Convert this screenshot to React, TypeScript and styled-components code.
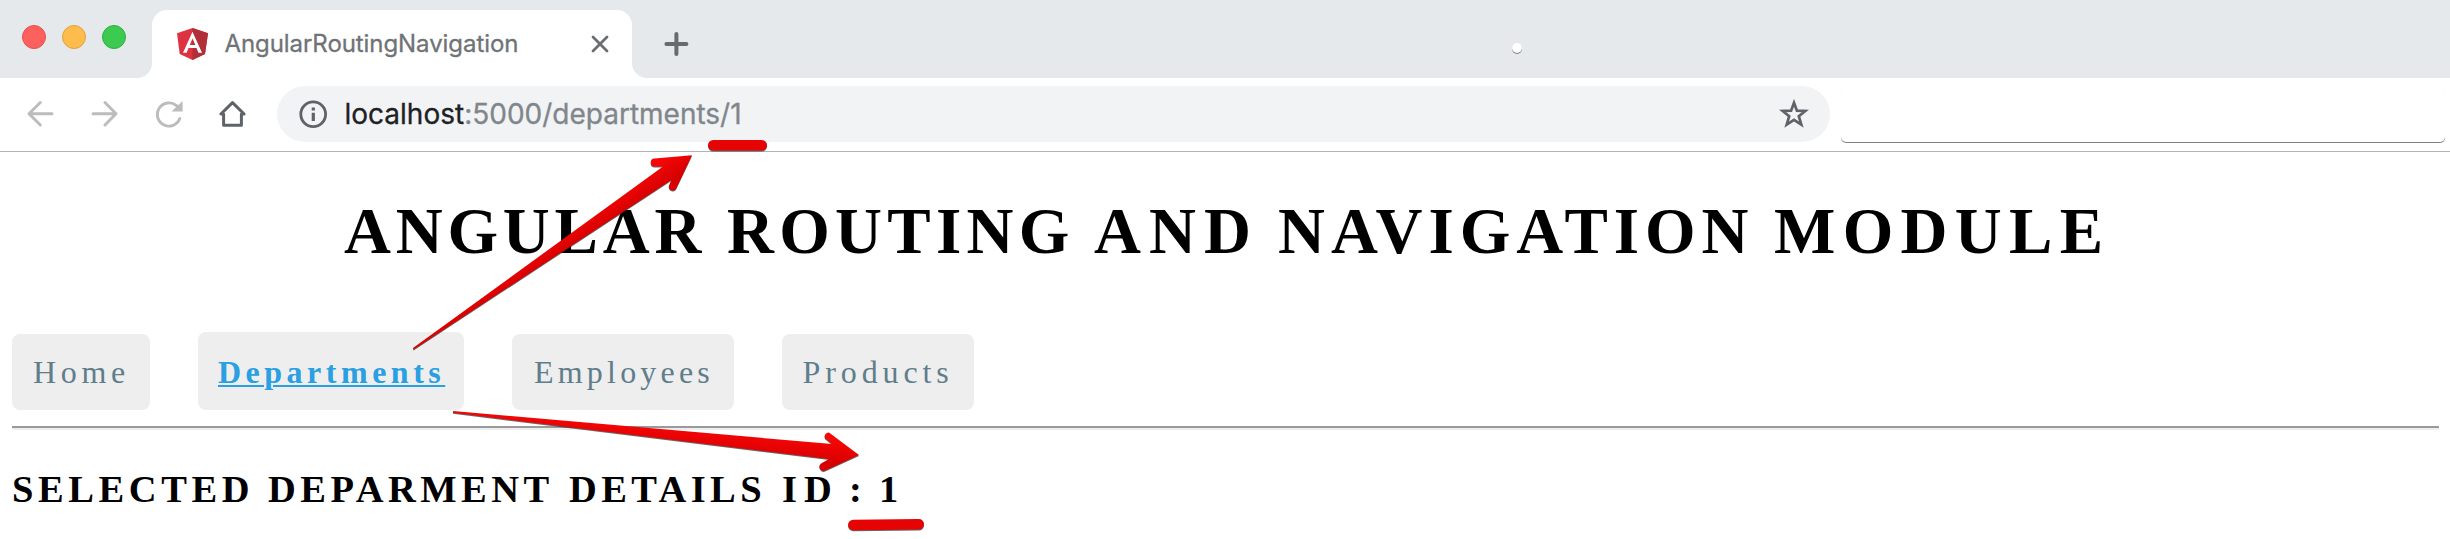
import React from "react";
import styled, { createGlobalStyle } from "styled-components";

const GlobalStyle = createGlobalStyle`
  * { box-sizing: border-box; }
  body { margin: 0; background: #fff; overflow: hidden; }
`;

const Page = styled.div`
  position: relative;
  width: 2450px;
  height: 539px;
  overflow: hidden;
  background: #fff;
`;

const TabStrip = styled.header`
  position: relative;
  display: flex;
  align-items: flex-start;
  height: 78px;
  padding-left: 22px;
  background: #e5e9ec;
`;

const TrafficLights = styled.div`
  display: flex;
  gap: 16px;
  width: 130px;
  padding-top: 25px;
`;

const Light = styled.span<{ $fill: string; $rim: string }>`
  width: 24px;
  height: 24px;
  border-radius: 50%;
  border: 1px solid ${(p) => p.$rim};
  background: ${(p) => p.$fill};
`;

const Tab = styled.div`
  position: relative;
  display: flex;
  align-items: center;
  width: 480px;
  height: 68px;
  margin-top: 10px;
  padding: 0 22px 0 25px;
  background: #fff;
  border-radius: 15px 15px 0 0;
  &::before,
  &::after {
    content: "";
    position: absolute;
    bottom: 0;
    width: 15px;
    height: 15px;
  }
  &::before {
    left: -15px;
    background: radial-gradient(circle at 0 0, transparent 14.5px, #fff 15.5px);
  }
  &::after {
    right: -15px;
    background: radial-gradient(circle at 100% 0, transparent 14.5px, #fff 15.5px);
  }
`;

const TabTitle = styled.span`
  flex: 1;
  margin-left: 16.5px;
  font: 400 24px/30px Inter, sans-serif;
  letter-spacing: -0.07px;
  color: #6f7376;
  -webkit-text-stroke: 0.3px #6f7376;
  white-space: nowrap;
`;

const NewTab = styled.div`
  margin: 32px 0 0 32px;
  line-height: 0;
`;

const StripDot = styled.span`
  position: absolute;
  left: 1512px;
  top: 43px;
  width: 10px;
  height: 10px;
  border-radius: 50%;
  background: #fff;
  box-shadow: 0 1px 0 #7d8083;
`;

const Toolbar = styled.div`
  display: flex;
  align-items: center;
  height: 74px;
  padding: 0 5px 2px 26px;
  background: #fff;
  border-bottom: 1px solid #b1b2b3;
`;

const NavIcons = styled.div`
  display: flex;
  gap: 36px;
  width: 250.5px;
  svg { display: block; flex: none; }
`;

const AddressBar = styled.div`
  display: flex;
  align-items: center;
  width: 1553.5px;
  height: 56px;
  padding: 0 21px 0 22px;
  border-radius: 28px;
  background: #f1f3f4;
`;

const Url = styled.span`
  flex: 1;
  margin-left: 18px;
  font: 400 28px/36px Inter, sans-serif;
  letter-spacing: 0;
  color: #80868b;
  -webkit-text-stroke: 0.3px currentColor;
  white-space: nowrap;
`;

const Host = styled.span`
  color: #202124;
`;

const BlankBox = styled.div`
  flex: 1;
  height: 55px;
  margin: 2px 0 0 11px;
  border-radius: 5px;
  background: #fff;
  box-shadow: 0 1px 0 #808184;
`;

const Content = styled.main`
  padding: 0 11px 0 12px;
  font-family: Baskerville, "Liberation Serif", serif;
`;

const Title = styled.h1`
  display: grid;
  grid-template-columns: 383px 367px 184px 496px auto;
  margin: 0;
  padding: 42px 0 0 332px;
  font-size: 65px;
  line-height: 74px;
  font-weight: 700;
  color: #000;
  white-space: nowrap;
`;

const Word = styled.span<{ $spacing: number }>`
  letter-spacing: ${(p) => p.$spacing}px;
`;

const Menu = styled.nav`
  display: flex;
  align-items: flex-end;
  gap: 48px;
  height: 78px;
  margin-top: 64px;
`;

const MenuItem = styled.a<{ $width: number; $inset: number; $active?: boolean; $spacing: number }>`
  width: ${(p) => p.$width}px;
  height: ${(p) => (p.$active ? 78 : 76)}px;
  padding: ${(p) => (p.$active ? 22 : 20)}px 0 0 ${(p) => p.$inset}px;
  border-radius: 8px;
  background: #eee;
  font-size: 32px;
  line-height: 36px;
  font-weight: ${(p) => (p.$active ? 700 : 400)};
  letter-spacing: ${(p) => p.$spacing}px;
  color: ${(p) => (p.$active ? "#2a9fe2" : "#607d8b")};
  text-decoration: ${(p) => (p.$active ? "underline" : "none")};
  text-decoration-thickness: 2px;
  text-underline-offset: 2px;
  white-space: nowrap;
`;

const Rule = styled.hr`
  height: 4px;
  margin: 16px 0 0;
  border: 0;
  border-top: 2px solid #9a9a9a;
  border-bottom: 2px solid #eee;
`;

const SubTitle = styled.h2`
  display: grid;
  grid-template-columns: 256px 301px 213px 67px 30px auto;
  margin: 37px 0 0;
  font-size: 38.5px;
  line-height: 44px;
  font-weight: 700;
  color: #000;
  white-space: nowrap;
`;

const Annotations = styled.svg`
  position: absolute;
  inset: 0;
  pointer-events: none;
`;

const titleWords = [
  { text: "ANGULAR", spacing: 4.8 },
  { text: "ROUTING", spacing: 5.3 },
  { text: "AND", spacing: 8 },
  { text: "NAVIGATION", spacing: 6 },
  { text: "MODULE", spacing: 7.3 },
];

const subTitleWords = [
  { text: "SELECTED", spacing: 4.6 },
  { text: "DEPARMENT", spacing: 4.5 },
  { text: "DETAILS", spacing: 4.4 },
  { text: "ID", spacing: 7 },
  { text: ":", spacing: 0 },
  { text: "1", spacing: 0 },
];

const items = [
  { label: "Home", width: 138, inset: 21, spacing: 4.7 },
  { label: "Departments", width: 266, inset: 20, spacing: 4.5, active: true },
  { label: "Employees", width: 222, inset: 22, spacing: 4.2 },
  { label: "Products", width: 192, inset: 20.5, spacing: 4.9 },
];

export default function App() {
  return (
    <Page>
      <GlobalStyle />
      <TabStrip>
        <TrafficLights>
          <Light $fill="#fc615d" $rim="#e6514f" />
          <Light $fill="#fdbc4b" $rim="#dfa33c" />
          <Light $fill="#3dca50" $rim="#2fb041" />
        </TrafficLights>
        <Tab>
          <svg width="31" height="32" viewBox="0 0 31 32">
            <path d="M15.5 0 0 5.2 2.7 26 15.5 32 28 26 31 5.2z" fill="#dd3340" />
            <path d="M15.5 0V32L28 26 31 5.2z" fill="#b02f38" />
            <path
              d="M15.5 3.7 6 24.7h3.6l1.9-4.7h8l1.9 4.7H25zM15.5 10.4l2.8 6.7h-5.6z"
              fill="#fff"
              fillRule="evenodd"
            />
          </svg>
          <TabTitle>AngularRoutingNavigation</TabTitle>
          <svg width="20" height="20" viewBox="0 0 20 20" stroke="#6a6e72" strokeWidth="2.8" strokeLinecap="round">
            <path d="M3 3 17 17M17 3 3 17" />
          </svg>
        </Tab>
        <NewTab>
          <svg width="25" height="24" viewBox="0 0 25 24" stroke="#686b6e" strokeWidth="4" strokeLinecap="round">
            <path d="M12.4 2v20M2.4 12h20" />
          </svg>
        </NewTab>
        <StripDot />
      </TabStrip>
      <Toolbar>
        <NavIcons>
          <svg width="28" height="28" viewBox="0 0 28 28" fill="none" stroke="#babcbe" strokeWidth="3" strokeLinecap="round" strokeLinejoin="round">
            <path d="M14.3 2.5 3 13.7 14.3 25M3 13.7H26" />
          </svg>
          <svg width="28" height="28" viewBox="0 0 28 28" fill="none" stroke="#babcbe" strokeWidth="3" strokeLinecap="round" strokeLinejoin="round">
            <path d="M15 2.5 26 13.7 15 25M26 13.7H3" />
          </svg>
          <svg width="29" height="28" viewBox="0 0 29 28">
            <path d="M25.8 18.6A11.6 11.6 0 1 1 22.5 5.7" fill="none" stroke="#babcbe" strokeWidth="2.9" strokeLinecap="round" />
            <path d="M28.6 1V11.6H17.5z" fill="#babcbe" />
          </svg>
          <svg width="28" height="28" viewBox="0 0 28 28" fill="none" stroke="#5f6368" strokeWidth="3" strokeLinejoin="round">
            <path d="M13.5 2.6 1.9 14H4.6V25.3H22.4V14H25.1z" />
          </svg>
        </NavIcons>
        <AddressBar>
          <svg width="28" height="28" viewBox="0 0 28 28" fill="none">
            <circle cx="14.2" cy="14.2" r="12.4" stroke="#5f6368" strokeWidth="2.8" />
            <path d="M14.3 7.6v3M14.3 12.8v8.2" stroke="#5f6368" strokeWidth="3.2" />
          </svg>
          <Url>
            <Host>localhost</Host>:5000/departments/1
          </Url>
          <svg width="30" height="30" viewBox="0 0 30 30" fill="none">
            <path d="M15 3.8 17.9 11.7 26.3 12 19.8 17.2 22.3 25.6 15 20.9 7.7 25.6 10.2 17.2 3.7 12 12.1 11.7z" stroke="#5f6368" strokeWidth="2.7" />
          </svg>
        </AddressBar>
        <BlankBox />
      </Toolbar>
      <Content>
        <Title>
          {titleWords.map((w) => (
            <Word key={w.text} $spacing={w.spacing}>{w.text}</Word>
          ))}
        </Title>
        <Menu>
          {items.map((i) => (
            <MenuItem key={i.label} $width={i.width} $inset={i.inset} $active={i.active} $spacing={i.spacing}>
              {i.label}
            </MenuItem>
          ))}
        </Menu>
        <Rule />
        <SubTitle>
          {subTitleWords.map((w) => (
            <Word key={w.text} $spacing={w.spacing}>{w.text}</Word>
          ))}
        </SubTitle>
      </Content>
      <Annotations width="2450" height="539" viewBox="0 0 2450 539">
        <defs>
          <linearGradient id="up" gradientUnits="userSpaceOnUse" x1="661" y1="162" x2="673" y2="180">
            <stop offset="0" stopColor="#f60606" />
            <stop offset="1" stopColor="#d60000" />
          </linearGradient>
          <linearGradient id="down" gradientUnits="userSpaceOnUse" x1="832" y1="440" x2="830" y2="464">
            <stop offset="0" stopColor="#f60606" />
            <stop offset="1" stopColor="#d60000" />
          </linearGradient>
          <filter id="shade" x="-5%" y="-20%" width="110%" height="150%" colorInterpolationFilters="sRGB">
            <feDropShadow dx="0" dy="1" stdDeviation="0.4" floodColor="#333" floodOpacity="0.75" />
          </filter>
        </defs>
        <g filter="url(#shade)">
          <path d="M413 348 663 166.5H655A4 4 0 0 1 654.5 158.5L692 155.3 676.2 188.5A4 4 0 0 1 668.8 186.2L671.3 180 413.6 349.5z" fill="url(#up)" />
          <path d="M453 411 832 444 825 438.2A4 4 0 0 1 829 432.6L859 455 825.8 470.2A4 4 0 0 1 821.5 463.3L829 459 453 412.8z" fill="url(#down)" />
          <path d="M713.2 145.2H761.8" stroke="#e60303" strokeWidth="10.4" strokeLinecap="round" />
          <path d="M853.3 525 918.8 524.3" stroke="#e60303" strokeWidth="10.4" strokeLinecap="round" />
        </g>
      </Annotations>
    </Page>
  );
}
